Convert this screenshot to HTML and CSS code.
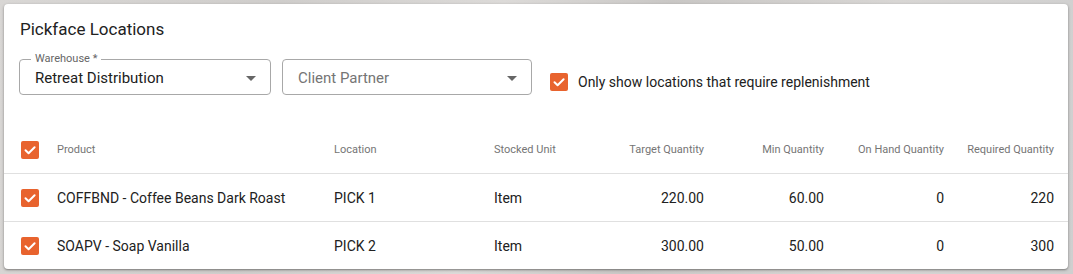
FILE: index.html
```html
<!DOCTYPE html>
<html lang="en">

<head>
    <meta charset="UTF-8">
    <meta name="viewport" content="width=device-width, initial-scale=1.0">
    <title>Pickface Locations</title>
    <link rel="stylesheet" href="styles.css">
</head>

<body>
    <div class="page">
        <div class="card">
            <h1 class="title">Pickface Locations</h1>

            <div class="filters">
                <div class="field warehouse">
                    <span class="legend">Warehouse *</span>
                    <span class="value">Retreat Distribution</span>
                    <span class="arrow"></span>
                </div>
                <div class="field partner">
                    <span class="value placeholder">Client Partner</span>
                    <span class="arrow"></span>
                </div>
                <label class="option">
                    <span class="check">
                        <svg viewBox="0 0 18 18" width="18" height="18"><path d="M4.5 9.2 L7.6 12.2 L13.6 6.2" /></svg>
                    </span>
                    <span>Only show locations that require replenishment</span>
                </label>
            </div>

            <div class="grid">
                <div class="row head">
                    <div class="cell"><span class="check"><svg viewBox="0 0 18 18" width="18" height="18"><path d="M4.5 9.2 L7.6 12.2 L13.6 6.2" /></svg></span></div>
                    <div class="cell">Product</div>
                    <div class="cell">Location</div>
                    <div class="cell">Stocked Unit</div>
                    <div class="cell num">Target Quantity</div>
                    <div class="cell num">Min Quantity</div>
                    <div class="cell num">On Hand Quantity</div>
                    <div class="cell num">Required Quantity</div>
                </div>
                <div class="row">
                    <div class="cell"><span class="check"><svg viewBox="0 0 18 18" width="18" height="18"><path d="M4.5 9.2 L7.6 12.2 L13.6 6.2" /></svg></span></div>
                    <div class="cell">COFFBND - Coffee Beans Dark Roast</div>
                    <div class="cell">PICK 1</div>
                    <div class="cell">Item</div>
                    <div class="cell num">220.00</div>
                    <div class="cell num">60.00</div>
                    <div class="cell num">0</div>
                    <div class="cell num">220</div>
                </div>
                <div class="row">
                    <div class="cell"><span class="check"><svg viewBox="0 0 18 18" width="18" height="18"><path d="M4.5 9.2 L7.6 12.2 L13.6 6.2" /></svg></span></div>
                    <div class="cell">SOAPV - Soap Vanilla</div>
                    <div class="cell">PICK 2</div>
                    <div class="cell">Item</div>
                    <div class="cell num">300.00</div>
                    <div class="cell num">50.00</div>
                    <div class="cell num">0</div>
                    <div class="cell num">300</div>
                </div>
            </div>
        </div>
    </div>
</body>

</html>
```

FILE: styles.css
```css
html, body {
    margin: 0;
    height: 100%;
}
body {
    font-family: Roboto, "Liberation Sans", sans-serif;
    color: #212121;
    background: linear-gradient(100deg, #d9d7d5 0%, #cfcdcb 25%, #dcdad8 45%, #c9c7c5 60%, #d8d6d4 80%, #cfcfcf 100%);
    overflow: hidden;
}
.page {
    padding: 4px 5px 4px 4px;
}

/*--------------------------*/
.card {
    background: #fff;
    border-radius: 4px;
    box-shadow: 0 1px 3px rgba(0, 0, 0, .35), 0 1px 1px rgba(0, 0, 0, .12);
    height: 265px;
    padding-top: 13px;
    box-sizing: border-box;
    overflow: hidden;
}
.title {
    margin: 0 0 0 16px;
    font-size: 17px;
    font-weight: 400;
    line-height: 24px;
    color: #222;
}

.filters {
    display: flex;
    align-items: flex-start;
    margin: 18px 0 0 15px;
}
.field {
    position: relative;
    height: 36px;
    box-sizing: border-box;
    border: 1px solid #a8a8a8;
    border-radius: 4px;
    display: flex;
    align-items: center;
    padding: 0 14px 0 15px;
}
.field.warehouse {
    width: 252px;
}
.field.partner {
    width: 250px;
    margin-left: 11px;
}
.field .legend {
    position: absolute;
    top: -8px;
    left: 11px;
    padding: 0 4px;
    background: #fff;
    font-size: 11px;
    line-height: 14px;
    color: #666;
}
.field .value {
    flex: 1;
    font-size: 15px;
    color: #212121;
    padding-top: 1px;
}
.field .placeholder {
    color: #757575;
}
.field .arrow {
    width: 0;
    height: 0;
    border-left: 5px solid transparent;
    border-right: 5px solid transparent;
    border-top: 5px solid #666;
    margin-top: 2px;
}

.option {
    display: flex;
    align-items: center;
    margin: 14px 0 0 18px;
    font-size: 14px;
    color: #212121;
}
.option .check {
    margin-right: 10px;
}

.check {
    display: inline-block;
    width: 18px;
    height: 18px;
    border-radius: 2px;
    background: #e8632e;
}
.check svg {
    display: block;
}
.check path {
    fill: none;
    stroke: #fff;
    stroke-width: 2;
    stroke-linecap: round;
    stroke-linejoin: round;
}

/*--------------------------*/
.grid {
    margin-top: 31px;
}
.row {
    display: grid;
    grid-template-columns: 36px 277px 160px 90px 120px 120px 120px 110px;
    padding: 0 14px 0 17px;
    height: 48px;
    box-sizing: border-box;
    align-items: center;
    border-bottom: 1px solid #e0e0e0;
    font-size: 14px;
    color: #212121;
}
.row.head {
    font-size: 11px;
    color: #757575;
}
.row .cell {
    white-space: nowrap;
}
.row .cell:first-child {
    display: flex;
    align-items: center;
}
.row .num {
    text-align: right;
}
```
